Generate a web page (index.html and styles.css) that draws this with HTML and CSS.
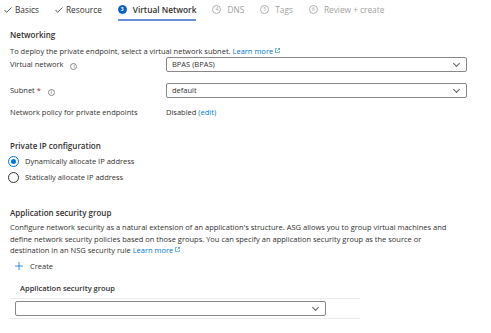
FILE: index.html
```html
<!DOCTYPE html>
<html lang="en">
<head>
    <meta charset="UTF-8">
    <title>Create a private endpoint</title>
    <link rel="stylesheet" href="styles.css">
</head>
<body>
    <nav class="tabs">
        <div class="tab done">
            <svg class="check" viewBox="0 0 8 6"><polyline points="0.5,3 2.6,5.3 7.5,0.5"/></svg>Basics
        </div>
        <div class="tab done">
            <svg class="check" viewBox="0 0 8 6"><polyline points="0.5,3 2.6,5.3 7.5,0.5"/></svg>Resource
        </div>
        <div class="tab active"><span class="step">3</span>Virtual Network</div>
        <div class="tab off"><span class="step">4</span>DNS</div>
        <div class="tab off"><span class="step">5</span>Tags</div>
        <div class="tab off"><span class="step">6</span>Review + create</div>
    </nav>

    <main class="content">
        <h2 class="section-title first">Networking</h2>
        <p class="intro">To deploy the private endpoint, select a virtual network subnet. <a href="#" class="link">Learn more <svg class="ext" viewBox="0 0 6 6"><path d="M2.5 0.5H0.5V5.5H5.5V3.5M3.5 0.5H5.5V2.5M5.5 0.5L2.8 3.2"/></svg></a></p>

        <div class="field-row">
            <label class="field-label">Virtual network <span class="info">i</span></label>
            <div class="select">BPAS (BPAS)<span class="chevron"></span></div>
        </div>
        <div class="field-row">
            <label class="field-label">Subnet <span class="req">*</span> <span class="info">i</span></label>
            <div class="select">default<span class="chevron"></span></div>
        </div>
        <div class="field-row plain">
            <label class="field-label">Network policy for private endpoints</label>
            <div class="value">Disabled <a href="#" class="link">(edit)</a></div>
        </div>

        <h2 class="section-title">Private IP configuration</h2>
        <div class="radios">
            <div class="radio checked"><span class="dot"></span>Dynamically allocate IP address</div>
            <div class="radio"><span class="dot"></span>Statically allocate IP address</div>
        </div>

        <h2 class="section-title">Application security group</h2>
        <p class="desc">Configure network security as a natural extension of an application's structure. ASG allows you to group virtual machines and define network security policies based on those groups. You can specify an application security group as the source or<br>destination in an NSG security rule <a href="#" class="link">Learn more <svg class="ext" viewBox="0 0 6 6"><path d="M2.5 0.5H0.5V5.5H5.5V3.5M3.5 0.5H5.5V2.5M5.5 0.5L2.8 3.2"/></svg></a></p>

        <div class="create">
            <svg class="plus" viewBox="0 0 8 8"><path d="M4 0V8M0 4H8"/></svg>Create
        </div>

        <div class="asg-table">
            <div class="asg-head">Application security group</div>
            <div class="asg-row">
                <div class="select small"><span class="chevron"></span></div>
            </div>
        </div>
    </main>
</body>
</html>
```

FILE: styles.css
```css
body {
    margin: 0;
    font-family: 'Open Sans', 'Noto Sans', sans-serif;
    font-size: 7.5px;
    line-height: 11px;
    color: #323130;
    background-color: white;
}

.tabs {
    display: flex;
    gap: 16px;
    height: 21px;
    padding-left: 4px;
}

.tab {
    display: flex;
    align-items: center;
    height: 21px;
    padding-bottom: 2px;
    font-size: 8.3px;
    box-sizing: border-box;
}

.tab.active {
    font-weight: 600;
    border-bottom: 2px solid #6b8fd6;
    padding-bottom: 0;
}

.tab.off {
    color: #a19f9d;
}

.check {
    width: 8px;
    height: 6px;
    margin-right: 3px;
    fill: none;
    stroke: #323130;
    stroke-width: 0.8;
}

.step {
    display: inline-flex;
    align-items: center;
    justify-content: center;
    width: 9px;
    height: 9px;
    box-sizing: border-box;
    border-radius: 50%;
    font-size: 5px;
    line-height: 1;
    margin-right: 6px;
    border: 1px solid #b3b0ad;
}

.tab.active .step {
    background-color: #0f5fbf;
    border-color: #0f5fbf;
    color: white;
    font-weight: 700;
}

.content {
    padding-left: 10px;
}

.section-title {
    font-size: 8px;
    line-height: 11px;
    font-weight: 600;
    margin: 22px 0 0;
}

.section-title.first {
    margin-top: 8px;
}

.intro {
    margin: 6px 0 0;
    line-height: 10px;
}

.link {
    color: #0078d4;
    text-decoration: none;
}

.ext {
    width: 5px;
    height: 5px;
    fill: none;
    stroke: #0078d4;
    stroke-width: 0.7;
    vertical-align: 1px;
}

.field-row {
    display: flex;
    align-items: center;
    margin-top: 11px;
}

.field-row:first-of-type {
    margin-top: 1px;
}

.field-row.plain {
    margin-top: 9px;
}

.field-label {
    width: 156px;
}

.info {
    display: inline-flex;
    align-items: center;
    justify-content: center;
    width: 7px;
    height: 7px;
    box-sizing: border-box;
    border: 0.8px solid #8a8886;
    border-radius: 50%;
    font-size: 4.5px;
    line-height: 1;
    margin-left: 5px;
    vertical-align: -1px;
}

.req {
    color: #a4262c;
}

.select {
    position: relative;
    width: 301px;
    height: 15px;
    box-sizing: border-box;
    border: 1px solid #8a8886;
    border-radius: 2px;
    padding-left: 5px;
    display: flex;
    align-items: center;
}

.select.small {
    width: 311px;
}

.chevron {
    position: absolute;
    right: 7px;
    top: 3px;
    width: 4px;
    height: 4px;
    border-right: 1px solid #605e5c;
    border-bottom: 1px solid #605e5c;
    transform: rotate(45deg);
}

.radios {
    margin-top: 3px;
}

.radio {
    display: flex;
    align-items: center;
    height: 15.5px;
}

.dot {
    width: 11px;
    height: 11px;
    box-sizing: border-box;
    border: 1px solid #323130;
    border-radius: 50%;
    margin: 0 6px 0 -2px;
    display: flex;
    align-items: center;
    justify-content: center;
}

.radio.checked .dot {
    border-color: #0078d4;
}

.radio.checked .dot::after {
    content: '';
    width: 5px;
    height: 5px;
    border-radius: 50%;
    background-color: #0078d4;
}

.desc {
    margin: 4px 0 0;
    width: 456px;
    line-height: 11.5px;
}

.create {
    display: flex;
    align-items: center;
    margin: 4px 0 0 5px;
}

.plus {
    width: 8px;
    height: 8px;
    margin-right: 7px;
    stroke: #0078d4;
    stroke-width: 0.8;
}

.asg-table {
    width: 350px;
    margin-top: 11px;
}

.asg-head {
    font-weight: 600;
    padding: 0 0 4px 10px;
    border-bottom: 1px solid #edebe9;
}

.asg-row {
    padding: 2px 0 2px 5px;
    border-bottom: 1px solid #edebe9;
}
```
